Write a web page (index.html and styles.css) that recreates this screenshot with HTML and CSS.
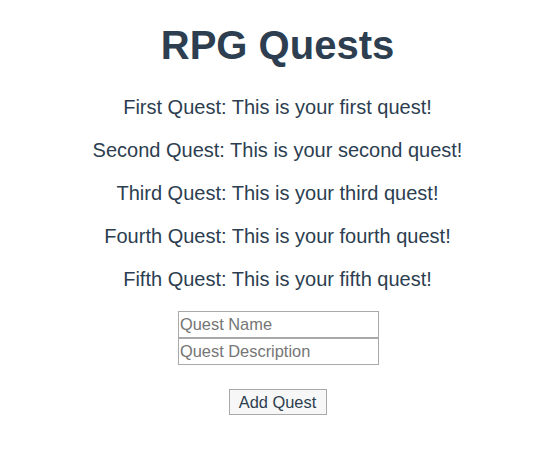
FILE: index.html
```html
<!DOCTYPE html>
<html>
<head>
<meta charset="utf-8">
<link rel="stylesheet" href="styles.css">
</head>
<body>
<div class="app">
  <h1 class="title">RPG Quests</h1>
  <p class="quest">First Quest: This is your first quest!</p>
  <p class="quest">Second Quest: This is your second quest!</p>
  <p class="quest">Third Quest: This is your third quest!</p>
  <p class="quest">Fourth Quest: This is your fourth quest!</p>
  <p class="quest">Fifth Quest: This is your fifth quest!</p>
  <div class="form">
    <input class="field" type="text" placeholder="Quest Name">
    <input class="field" type="text" placeholder="Quest Description">
    <button class="add">Add Quest</button>
  </div>
</div>
</body>
</html>
```
FILE: styles.css
```css
html, body {
  margin: 0;
  padding: 0;
  background: #ffffff;
}
.app {
  font-family: "Liberation Sans", Arial, sans-serif;
  color: #2c3e50;
  text-align: center;
  padding-top: 22px;
}
.title {
  font-size: 40px;
  font-weight: bold;
  line-height: 46px;
  margin: 0 0 28px;
}
.quest {
  font-size: 20px;
  line-height: 23px;
  margin: 0 0 20px;
}
.form {
  display: flex;
  flex-direction: column;
  align-items: center;
}
.field {
  box-sizing: border-box;
  width: 201px;
  height: 27px;
  margin: 0 0 0 2px;
  padding: 0 1px;
  border: 1px solid #a9a9a9;
  font-family: "Liberation Sans", Arial, sans-serif;
  font-size: 16.4px;
  color: #2c3e50;
  background: #fff;
  outline: none;
}
.field::placeholder {
  color: #757575;
}
.add {
  box-sizing: border-box;
  margin-top: 24px;
  width: 98px;
  height: 26px;
  padding: 0;
  border: 1px solid #a9a9a9;
  background: #f7f7f7;
  font-family: "Liberation Sans", Arial, sans-serif;
  font-size: 16.4px;
  color: #2c3e50;
}
```
